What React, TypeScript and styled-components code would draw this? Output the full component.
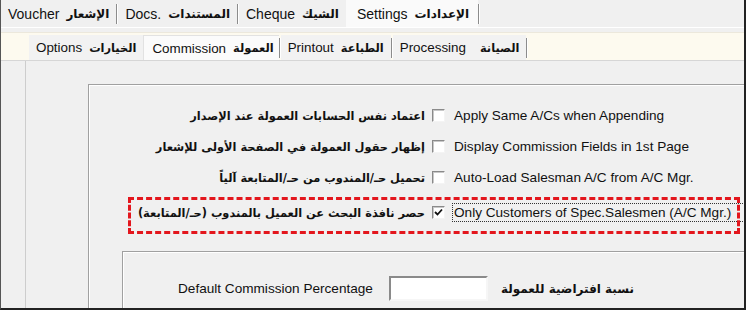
import styled, { createGlobalStyle, css } from "styled-components";

const GlobalStyle = createGlobalStyle`
  html, body {
    margin: 0;
    padding: 0;
    background: #f0f0f0;
  }
  * {
    box-sizing: border-box;
  }
`;

const EN = `"Liberation Sans", Arial, sans-serif`;
const AR = `"DejaVu Sans", "Noto Sans", sans-serif`;

const Frame = styled.div`
  width: 746px;
  height: 310px;
  overflow: hidden;
  display: flex;
  flex-direction: column;
  background: #f0f0f0;
  border-left: 1px solid #555555;
  border-right: 2px solid #222222;
  border-bottom: 2px solid #222222;
  font-family: ${EN};
  color: #111111;
`;

const TopTabs = styled.div`
  flex-shrink: 0;
  display: flex;
  align-items: stretch;
  height: 28px;
  border-bottom: 1px solid #ffffff;
`;

const Tab = styled.div<{ $active?: boolean }>`
  display: flex;
  align-items: center;
  gap: 7px;
  padding: 0 7px;
  font-size: 14px;
  white-space: nowrap;
  ${(p) =>
    p.$active &&
    css`
      background: #fafafa;
      padding: 0 9px 0 11px;
    `}
`;

const Sep = styled.div`
  align-self: center;
  width: 2px;
  height: 20px;
  border-left: 1px solid #8c8c8c;
  border-right: 1px solid #ffffff;
`;

const Ar = styled.span<{ $size?: number }>`
  font-family: ${AR};
  font-weight: bold;
  font-size: ${(p) => p.$size ?? 12}px;
`;

const SubTabs = styled.div`
  flex-shrink: 0;
  display: flex;
  align-items: stretch;
  height: 29px;
  margin-top: 4px;
  padding: 2px 0 0 28px;
  background: #fdfaef;
  border-top: 1px solid #ece8dc;
  border-bottom: 1px solid #d6d6d6;
`;

const SubTab = styled(Tab)<{ $active?: boolean; $gap?: number }>`
  font-size: 13.4px;
  gap: ${(p) => p.$gap ?? 7}px;
  background: ${(p) => (p.$active ? "#fbfbfb" : "#f2f2f2")};
  ${(p) =>
    p.$active &&
    css`
      border-top: 1px solid #e2e2e2;
      border-left: 1px solid #e2e2e2;
      padding: 0 5px 0 8px;
    `}
`;

const Page = styled.div`
  flex: 1;
  min-height: 0;
  overflow: hidden;
  margin-left: 24px;
  border-left: 1px solid #cdcdcd;
  padding: 23px 0 0 62px;
`;

const GroupBox = styled.div<{ $inset?: number; $gapTop?: number }>`
  width: 800px;
  height: 400px;
  margin-left: ${(p) => p.$inset ?? 0}px;
  margin-top: ${(p) => p.$gapTop ?? 0}px;
  border-top: 1px solid #a0a0a0;
  border-left: 1px solid #a0a0a0;
  box-shadow: inset 1px 1px 0 #ffffff;
`;

const Options = styled.div`
  padding-top: 15px;
  display: flex;
  flex-direction: column;
`;

const Row = styled.div<{ $highlight?: boolean }>`
  position: relative;
  display: grid;
  grid-template-columns: 343px 13px auto;
  align-items: center;
  height: 31px;
  ${(p) =>
    p.$highlight &&
    css`
      margin-top: 4px;
      &::after {
        content: "";
        position: absolute;
        left: 39px;
        top: 0;
        width: 606px;
        height: 31px;
        border: 3px dashed #e3161d;
      }
    `}
`;

const ArLabel = styled.span`
  justify-self: end;
  padding-right: 7px;
  font-family: ${AR};
  font-weight: bold;
  font-size: 11.4px;
  direction: rtl;
  white-space: nowrap;
`;

const Box = styled.span`
  width: 13px;
  height: 13px;
  background: #ffffff;
  border-style: solid;
  border-width: 1px;
  border-color: #8a8a8a #f4f4f4 #f4f4f4 #8a8a8a;
  box-shadow: inset 1px 1px 0 #c8c8c8;
  display: flex;
  align-items: center;
  justify-content: center;
`;

const EnLabel = styled.span<{ $focus?: boolean }>`
  margin-left: 9px;
  font-size: 13.6px;
  white-space: nowrap;
  ${(p) =>
    p.$focus &&
    css`
      margin-left: 8px;
      padding: 1px 1px;
      outline: 1px dotted #333333;
    `}
`;

const Percent = styled.div`
  display: flex;
  align-items: center;
  padding: 24px 0 0 55px;
  font-size: 13.6px;
`;

const Field = styled.input`
  width: 99px;
  height: 25px;
  margin: 0 13px 0 16px;
  background: #ffffff;
  border-style: solid;
  border-width: 2px;
  border-color: #8a8a8a #f6f6f6 #f6f6f6 #8a8a8a;
  outline: none;
`;

const options = [
  { en: "Apply Same A/Cs when Appending", ar: "اعتماد نفس الحسابات العمولة عند الإصدار" },
  { en: "Display Commission Fields in 1st Page", ar: "إظهار حقول العمولة في الصفحة الأولى للإشعار" },
  { en: "Auto-Load Salesman A/C from A/C Mgr.", ar: "تحميل حـ/المندوب من حـ/المتابعة آلياً" },
];

function Check() {
  return (
    <svg width="9" height="9" viewBox="0 0 9 9">
      <path d="M1 4 L3.5 6.5 L8 1.5" fill="none" stroke="#111" strokeWidth="1.8" />
    </svg>
  );
}

export default function App() {
  return (
    <>
      <GlobalStyle />
      <Frame>
        <TopTabs>
          <Tab>
            Voucher <Ar>الإشعار</Ar>
          </Tab>
          <Sep />
          <Tab>
            Docs. <Ar>المستندات</Ar>
          </Tab>
          <Sep />
          <Tab>
            Cheque <Ar>الشيك</Ar>
          </Tab>
          <Tab $active>
            Settings <Ar>الإعدادات</Ar>
          </Tab>
          <Sep />
        </TopTabs>
        <SubTabs>
          <SubTab>
            Options <Ar $size={11.4}>الخيارات</Ar>
          </SubTab>
          <SubTab $active>
            Commission <Ar $size={11.4}>العمولة</Ar>
          </SubTab>
          <Sep />
          <SubTab>
            Printout <Ar $size={11.4}>الطباعة</Ar>
          </SubTab>
          <Sep />
          <SubTab $gap={14}>
            Processing <Ar $size={11.4}>الصيانة</Ar>
          </SubTab>
          <Sep />
        </SubTabs>
        <Page>
          <GroupBox>
            <Options>
              {options.map((o) => (
                <Row key={o.en}>
                  <ArLabel>{o.ar}</ArLabel>
                  <Box />
                  <EnLabel>{o.en}</EnLabel>
                </Row>
              ))}
              <Row $highlight>
                <ArLabel>حصر نافذة البحث عن العميل بالمندوب (حـ/المتابعة)</ArLabel>
                <Box>
                  <Check />
                </Box>
                <EnLabel $focus>Only Customers of Spec.Salesmen (A/C Mgr.)</EnLabel>
              </Row>
            </Options>
            <GroupBox $inset={33} $gapTop={23}>
              <Percent>
                Default Commission Percentage
                <Field />
                <Ar>نسبة افتراضية للعمولة</Ar>
              </Percent>
            </GroupBox>
          </GroupBox>
        </Page>
      </Frame>
    </>
  );
}
